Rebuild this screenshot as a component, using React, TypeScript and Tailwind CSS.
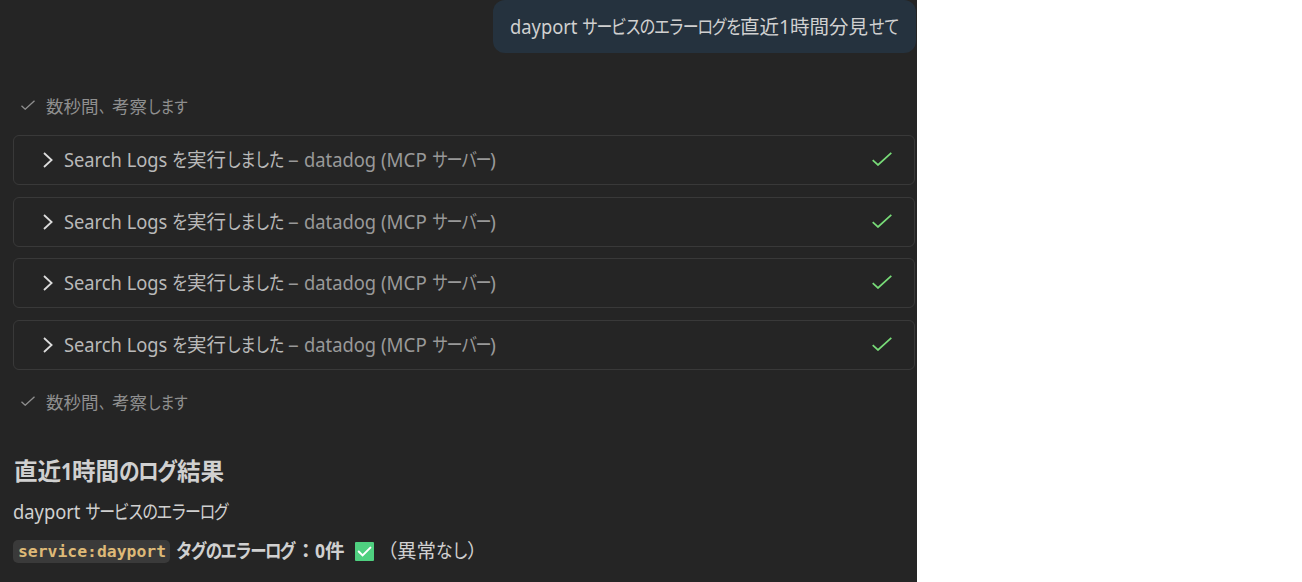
import React from 'react';

const font = "font-['Noto_Sans','Noto_Sans_CJK_JP',sans-serif]";

interface TextProps {
  width: string;
  scale?: string;
  className?: string;
  children: React.ReactNode;
}

// One run of text; kana runs are condensed with a scale-x class
const Run: React.FC<TextProps> = ({ width, scale = '', className = '', children }) => (
  <span className={`inline-block shrink-0 whitespace-nowrap ${width} ${className}`}>
    <span className={`inline-block origin-left ${scale}`}>{children}</span>
  </span>
);

const Check: React.FC<{ className: string }> = ({ className }) => (
  <svg viewBox="0 0 20 14" fill="none" stroke="currentColor" className={className}>
    <path d="M0.7 8.2 L6 13 L19.3 0.8" />
  </svg>
);

const Thinking: React.FC = () => (
  <div className="flex h-6 items-center pl-[21px] text-[17.5px] leading-6 text-[#8f8f8f]">
    <Check className="mr-[11px] mb-[3px] h-[10px] w-[14px] stroke-[1.9]" />
    <Run width="w-[53px]">数秒間</Run>
    <Run width="w-[13px]" scale="scale-x-[0.74]">、</Run>
    <Run width="w-[35px]">考察</Run>
    <Run width="w-[40px]" scale="scale-x-[0.84] tracking-[-0.1em]">します</Run>
  </div>
);

const ToolCall: React.FC = () => (
  <div className="flex h-[50px] items-center rounded-[6px] border border-[#393939] pr-[22px] pl-[29px] text-[19.5px] leading-6 text-[#b9b9b9]">
    <svg viewBox="0 0 10 16" fill="none" stroke="#dcdcdc" strokeWidth="1.8" className="mr-[11px] h-4 w-[10px]">
      <path d="M1 1 L8.6 8 L1 15" />
    </svg>
    <Run width="w-[108px]" scale="scale-x-[0.938]">Search Logs</Run>
    <Run width="w-[15px]" scale="scale-x-[0.82]">を</Run>
    <Run width="w-[39px]">実行</Run>
    <Run width="w-[62px]" scale="scale-x-[0.81] tracking-[-0.1em]">しました</Run>
    <Run width="w-[16px]" scale="scale-x-[1.1]" className="text-[#999]">–</Run>
    <Run width="w-[77px]" scale="scale-x-[0.94]" className="text-[#999]">datadog</Run>
    <Run width="w-[51px]" scale="scale-x-[0.96]" className="text-[#999]">(MCP</Run>
    <Run width="w-[58px]" scale="scale-x-[0.83] tracking-[-0.1em]" className="text-[#999]">サーバー</Run>
    <Run width="w-[6px]" className="text-[#999]">)</Run>
    <Check className="mb-[2px] ml-auto h-[14px] w-5 stroke-[1.7] text-[#78dc78]" />
  </div>
);

const App: React.FC = () => {
  return (
    <div className="h-[582px] overflow-hidden bg-white">
      <main className={`flex h-full w-[917px] flex-col bg-[#252525] pr-[2px] pl-[13px] text-[#d0d0d0] ${font}`}>
        <div className="-mr-[1px] flex h-[53px] w-[423px] items-center self-end rounded-xl bg-[#25323e] pl-[17px] text-[19.5px] leading-6">
          <Run width="w-[72px]" scale="scale-x-[0.94]">dayport</Run>
          <Run width="w-[158px]" scale="scale-x-[0.82] tracking-[-0.1em]">サービスのエラーログを</Run>
          <Run width="w-[39px]">直近</Run>
          <Run width="w-[11px]">1</Run>
          <Run width="w-[79px]">時間分見</Run>
          <Run width="w-[30px]" scale="scale-x-[0.82] tracking-[-0.08em]">せて</Run>
        </div>

        <div className="-ml-[13px] pt-[41px]">
          <Thinking />
        </div>

        <div className="mt-[17px] flex h-[235px] flex-col justify-between">
          <ToolCall />
          <ToolCall />
          <ToolCall />
          <ToolCall />
        </div>

        <div className="-ml-[13px] pt-5">
          <Thinking />
        </div>

        <h2 className="mt-[41px] flex h-8 items-center pl-[1px] text-[23.6px] leading-8 font-bold">
          <Run width="w-[47px]">直近</Run>
          <Run width="w-[11px]" scale="scale-x-[0.85]">1</Run>
          <Run width="w-[47px]">時間</Run>
          <Run width="w-[58px]" scale="scale-x-[0.88] tracking-[-0.08em]">のログ</Run>
          <Run width="w-[47px]">結果</Run>
        </h2>

        <p className="mt-[13px] flex h-6 items-center text-[19.5px] leading-6">
          <Run width="w-[72px]" scale="scale-x-[0.94]">dayport</Run>
          <Run width="w-[144px]" scale="scale-x-[0.815] tracking-[-0.1em]">サービスのエラーログ</Run>
        </p>

        <p className="mt-[15px] flex h-6 items-center text-[19.5px] leading-6">
          <code className="mr-[6px] h-[23px] w-[157px] rounded-[5px] bg-[#3a3a3a] pl-[5px] font-['DejaVu_Sans_Mono',monospace] text-[16.4px] leading-[23px] font-bold text-[#deb977]">
            service:dayport
          </code>
          <Run width="w-[120px]" scale="scale-x-[0.845] tracking-[-0.1em]" className="font-bold">タグのエラーログ</Run>
          <Run width="w-[19px]" className="font-bold">：</Run>
          <Run width="w-[10px]" scale="scale-x-[0.9]" className="font-bold">0</Run>
          <Run width="w-[30px]" className="font-bold">件</Run>
          <svg viewBox="0 0 19 19" className="mr-[4px] h-[19px] w-[19px]" fill="none">
            <rect width="19" height="19" rx="1" fill="#4fd080" />
            <path d="M3.7 9.5 L7.6 13.4 L15.4 5.6" stroke="#fff" strokeWidth="2" strokeLinecap="round" />
          </svg>
          <Run width="w-[19px]">（</Run>
          <Run width="w-[39px]">異常</Run>
          <Run width="w-[31px]" scale="scale-x-[0.86] tracking-[-0.06em]">なし</Run>
          <Run width="w-[20px]">）</Run>
        </p>
      </main>
    </div>
  );
};

export default App;
